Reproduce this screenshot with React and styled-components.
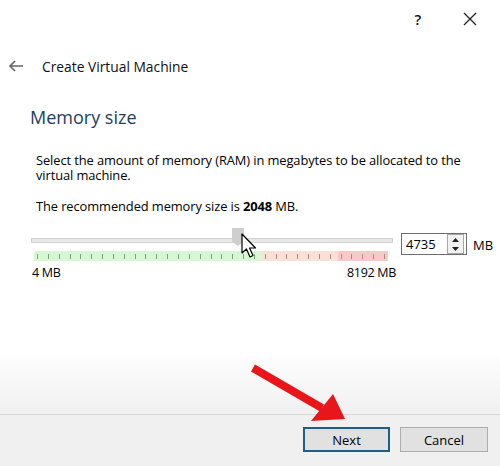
import styled, { createGlobalStyle } from "styled-components";

const GlobalStyle = createGlobalStyle`
  html, body {
    margin: 0;
    padding: 0;
    background: #ffffff;
  }
  body {
    font-family: "Open Sans", "Noto Sans", sans-serif;
    color: #000;
  }
`;

const Window = styled.div`
  position: relative;
  width: 500px;
  height: 466px;
  display: flex;
  flex-direction: column;
  background: #fff;
  overflow: hidden;
`;

const TitleBar = styled.div`
  height: 38px;
  display: flex;
  justify-content: flex-end;
  align-items: center;
  gap: 28px;
  padding-right: 18px;
`;

const TitleButton = styled.span`
  width: 24px;
  display: flex;
  justify-content: center;
  font-size: 15px;
  font-weight: 600;
  color: #111;
`;

const Header = styled.div`
  height: 56px;
  display: flex;
  align-items: center;
  padding-left: 8px;
  gap: 18px;
  font-size: 13.8px;
  color: #111;
`;

const Content = styled.div`
  padding: 0 0 0 30px;
`;

const Heading = styled.h1`
  margin: 0;
  height: 46px;
  display: flex;
  align-items: center;
  font-size: 18px;
  font-weight: 400;
  color: #22405f;
`;

const Paragraph = styled.p`
  margin: ${(p) => p.$top || 0}px 0 0 6px;
  font-size: 12.9px;
  line-height: 15px;
  padding-right: 20px;
  letter-spacing: -0.1px;
`;

const SliderRow = styled.div`
  margin-top: 14px;
  display: flex;
  align-items: flex-start;
`;

const SliderArea = styled.div`
  position: relative;
  width: 362px;
  margin-left: 1px;
`;

const Track = styled.div`
  margin-top: 10px;
  height: 3px;
  background: #e7e7e7;
  border: 1px solid #d4d4d4;
`;

const Ticks = styled.div`
  margin: 8px 5px 0 3px;
  height: 10px;
  display: flex;
  justify-content: space-between;
  align-items: center;
  padding: 0 3px;
  background: linear-gradient(
    to right,
    #d8f7d4 0%,
    #d8f7d4 64.5%,
    #fbe0d8 64.5%,
    #fbe0d8 86%,
    #f7c9c9 86%,
    #f7c9c9 100%
  );
`;

const Tick = styled.span`
  width: 1px;
  height: 5px;
  background: ${(p) => p.$color};
`;

const Thumb = styled.div`
  position: absolute;
  left: 201px;
  top: 0;
  width: 12px;
  height: 18px;
  background: #cfcfcf;
  clip-path: polygon(0 0, 100% 0, 100% 75%, 50% 100%, 0 75%);
`;

const Spin = styled.div`
  margin-left: 8px;
  margin-top: 5px;
  width: 66px;
  height: 22px;
  border: 1px solid #6f6f6f;
  display: flex;
  align-items: center;
  justify-content: space-between;
  padding-left: 4px;
  box-sizing: border-box;
  font-size: 13px;
`;

const SpinButtons = styled.div`
  width: 15px;
  height: 18px;
  margin-right: 2px;
  border: 1px solid #a8a8a8;
  background: #f2f2f2;
  display: flex;
  flex-direction: column;
  align-items: center;
  justify-content: space-around;
`;

const Unit = styled.span`
  margin: 8px 0 0 6px;
  font-size: 13px;
`;

const Labels = styled.div`
  width: 364px;
  display: flex;
  justify-content: space-between;
  margin: 3px 0 0 2px;
  font-size: 12.5px;
  letter-spacing: -0.3px;
`;

const Spacer = styled.div`
  flex: 1;
  background: linear-gradient(to bottom, #fff 0%, #fff 52%, #f0f0f0 100%);
`;

const Footer = styled.div`
  height: 49px;
  border-top: 1px solid #d9d9d9;
  background: #f0f0f0;
  display: flex;
  justify-content: flex-end;
  align-items: center;
  gap: 10px;
  padding-right: 12px;
  padding-bottom: 2px;
`;

const Button = styled.button`
  width: ${(p) => (p.$primary ? 87 : 88)}px;
  height: 25px;
  font-family: inherit;
  font-size: 13px;
  color: #000;
  background: #e1e1e1;
  border: ${(p) => (p.$primary ? "2px solid #1f5c86" : "1px solid #adadad")};
  box-sizing: border-box;
`;

const Overlay = styled.svg`
  position: absolute;
  left: 0;
  top: 0;
  pointer-events: none;
`;

const tickCount = 33;

export default function App() {
  return (
    <>
      <GlobalStyle />
      <Window>
        <TitleBar>
          <TitleButton>?</TitleButton>
          <TitleButton>
            <svg width="14" height="14" viewBox="0 0 14 14">
              <path d="M1 1L13 13M13 1L1 13" stroke="#222" strokeWidth="1.3" />
            </svg>
          </TitleButton>
        </TitleBar>
        <Header>
          <svg width="16" height="12" viewBox="0 0 16 12">
            <path d="M15 6H2M7 1L2 6l5 5" stroke="#666" strokeWidth="1.6" fill="none" />
          </svg>
          <span>Create Virtual Machine</span>
        </Header>
        <Content>
          <Heading>Memory size</Heading>
          <Paragraph $top={13}>
            Select the amount of memory (RAM) in megabytes to be allocated to the virtual machine.
          </Paragraph>
          <Paragraph $top={16}>
            The recommended memory size is <b>2048</b> MB.
          </Paragraph>
          <SliderRow>
            <SliderArea>
              <Track />
              <Thumb />
              <Ticks>
                {Array.from({ length: tickCount }, (_, i) => (
                  <Tick key={i} $color={i < 21 ? "#7aa57a" : "#b08a80"} />
                ))}
              </Ticks>
            </SliderArea>
            <Spin>
              <span>4735</span>
              <SpinButtons>
                <svg width="7" height="4" viewBox="0 0 7 4">
                  <path d="M0 4L3.5 0L7 4Z" fill="#222" />
                </svg>
                <svg width="7" height="4" viewBox="0 0 7 4">
                  <path d="M0 0L3.5 4L7 0Z" fill="#222" />
                </svg>
              </SpinButtons>
            </Spin>
            <Unit>MB</Unit>
          </SliderRow>
          <Labels>
            <span>4 MB</span>
            <span>8192 MB</span>
          </Labels>
        </Content>
        <Spacer />
        <Footer>
          <Button $primary>Next</Button>
          <Button>Cancel</Button>
        </Footer>
        <Overlay width="500" height="466" viewBox="0 0 500 466">
          <path
            d="M242 234 L242 253 L246.5 249 L250 257 L253 255.5 L249.5 248 L255.5 248 Z"
            fill="#fff"
            stroke="#000"
            strokeWidth="1.2"
            strokeLinejoin="round"
          />
          <path d="M253 368 L322 408" stroke="#e8161b" strokeWidth="8" strokeLinecap="butt" />
          <path d="M345 419 L311 421 L333 394 Z" fill="#e8161b" />
        </Overlay>
      </Window>
    </>
  );
}
